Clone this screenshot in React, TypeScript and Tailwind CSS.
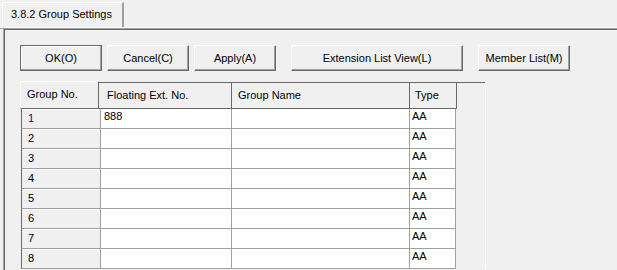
import React from "react";

const font = { fontFamily: '"Liberation Sans", Arial, sans-serif' };

function Btn({ label, w, def }: { label: string; w: string; def?: boolean }) {
  return (
    <div
      className={`${w} h-[26px] flex items-center justify-center text-[11px] text-black bg-[#f0f0f0] ${
        def
          ? "border border-[#696969] shadow-[inset_-1px_-1px_0_#a0a0a0,inset_1px_1px_0_#ffffff]"
          : "border-t border-l border-b border-r border-t-white border-l-white border-b-[#696969] border-r-[#696969] shadow-[inset_-1px_-1px_0_#a0a0a0]"
      }`}
    >
      {label}
    </div>
  );
}

export default function App() {
  const rows = [1, 2, 3, 4, 5, 6, 7, 8];
  return (
    <div className="w-[617px] h-[270px] bg-[#f0f0f0] overflow-hidden flex flex-col" style={font}>
      {/* tab strip */}
      <div className="h-[27px] flex items-end shrink-0">
        <div className="ml-[2px] w-[122px] h-[25px] border-t border-l border-t-white border-l-white border-r-2 border-r-[#a0a0a0] flex items-center pl-[8px] text-[11px] text-black">
          <span className="-mt-[1px]">3.8.2 Group Settings</span>
        </div>
      </div>
      <div className="h-[1px] bg-white shrink-0" />
      <div className="h-[1px] bg-[#a0a0a0] shrink-0" />
      {/* page */}
      <div className="flex-1 ml-[3px] border-l border-l-[#a0a0a0] flex">
        <div className="flex-1 border-l border-t border-l-[#696969] border-t-[#696969] pl-[15px] pt-[15px] flex flex-col">
          {/* buttons */}
          <div className="flex items-start">
            <Btn label="OK(O)" w="w-[82px]" def />
            <div className="ml-[5px]">
              <Btn label="Cancel(C)" w="w-[82px]" />
            </div>
            <div className="ml-[5px]">
              <Btn label="Apply(A)" w="w-[82px]" />
            </div>
            <div className="ml-[15px]">
              <Btn label="Extension List View(L)" w="w-[172px]" />
            </div>
            <div className="ml-[15px]">
              <Btn label="Member List(M)" w="w-[92px]" />
            </div>
          </div>
          {/* grid */}
          <div className="mt-[10px] w-[466px] border-r border-r-white text-[11px] text-black">
            {/* header */}
            <div className="flex h-[28px]">
              <div className="w-[79px] h-[28px] border-t border-l border-t-white border-l-white border-r border-b border-r-[#696969] border-b-[#696969] flex items-center pl-[6px]">
                <span className="-mt-[2px]">Group No.</span>
              </div>
              <div className="flex-1 flex border-t border-t-[#696969] mt-[1px] h-[27px]">
                <div className="w-[133px] border-r border-b border-[#696969] flex items-center pl-[8px]">
                  Floating Ext. No.
                </div>
                <div className="w-[178px] border-r border-b border-[#696969] flex items-center pl-[6px]">
                  Group Name
                </div>
                <div className="w-[47px] border-r border-b border-[#696969] flex items-center pl-[5px]">
                  Type
                </div>
              </div>
            </div>
            {/* rows */}
            {rows.map((n) => (
              <div key={n} className="flex h-[20px] ml-[1px]">
                <div className="w-[80px] h-[20px] bg-[#f0f0f0] border-l border-l-[#696969] border-r border-b border-r-[#a0a0a0] border-b-[#a0a0a0] shadow-[inset_0_1px_0_#ffffff] flex items-center pl-[6px]">
                  <span className={n === 1 ? "text-[#400060]" : "text-black"}>{n}</span>
                </div>
                <div className="w-[131px] h-[20px] bg-white border-r border-b border-[#a0a0a0] pl-[3px] pt-[1px] leading-[13px]">
                  {n === 1 ? "888" : ""}
                </div>
                <div className="w-[178px] h-[20px] bg-white border-r border-b border-[#a0a0a0]" />
                <div className="w-[46px] h-[20px] bg-white border-r border-b border-[#a0a0a0] pl-[2px] pt-[1px] leading-[13px]">
                  AA
                </div>
              </div>
            ))}
          </div>
        </div>
      </div>
    </div>
  );
}
